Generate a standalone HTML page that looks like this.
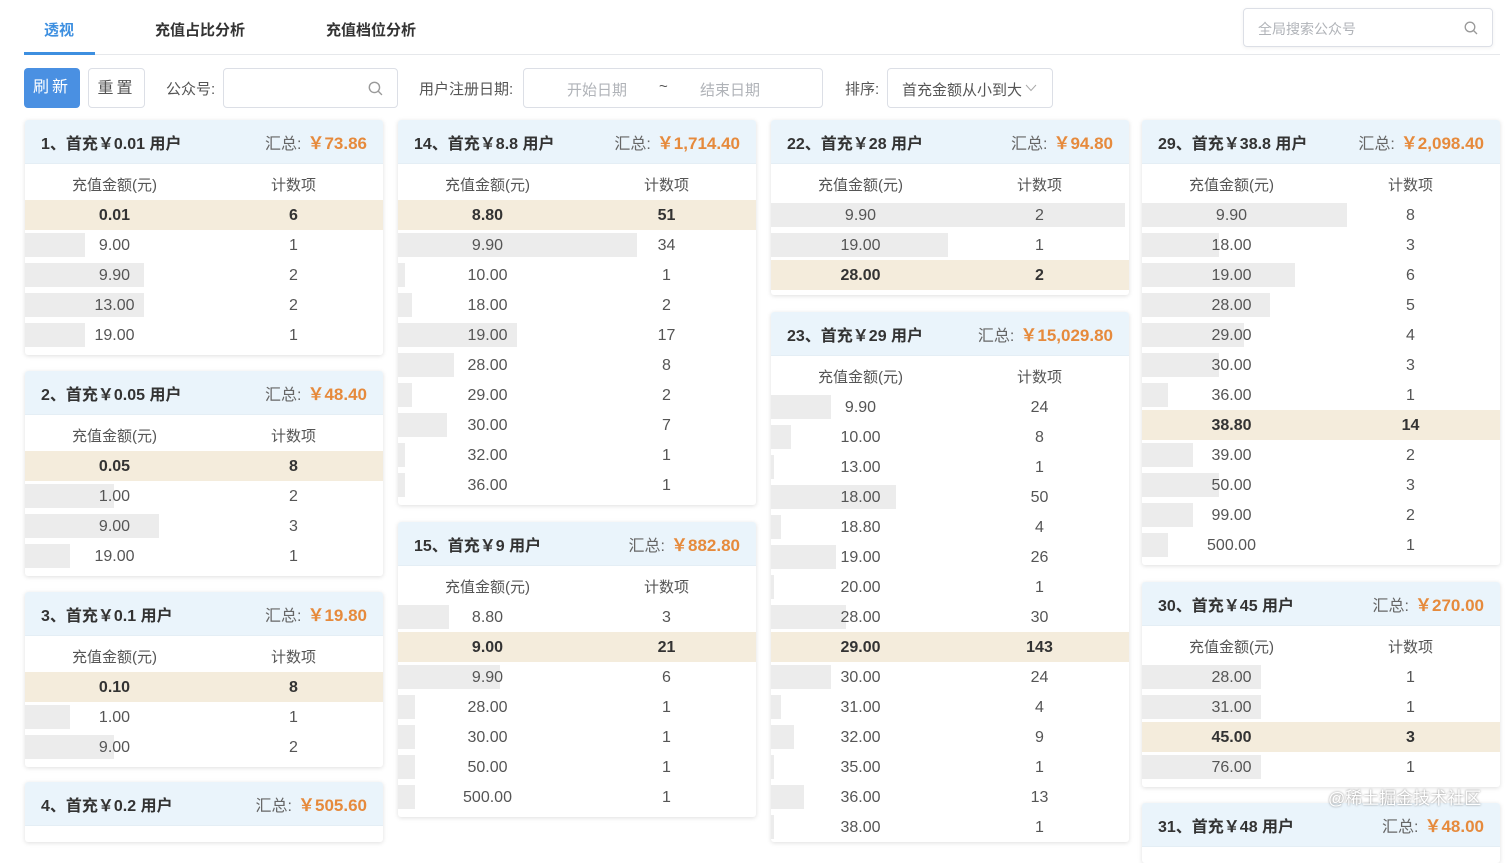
<!DOCTYPE html>
<html><head><meta charset="utf-8">
<style>
*{margin:0;padding:0;box-sizing:border-box}
body{width:1512px;height:829px;overflow:hidden;background:#fff;font-family:"Liberation Sans","Noto Sans CJK SC",sans-serif;color:#333;position:relative}
.tabs{position:absolute;left:24px;top:0;right:12px;height:55px;border-bottom:1px solid #e6e8eb}
.tab{position:absolute;top:19px;font-size:15px;font-weight:bold;color:#333}
.tab.a{color:#3d8fe0}
.ul{position:absolute;left:0;top:52px;width:71px;height:3px;background:#3d8fe0}
.gs{position:absolute;left:1243px;top:8px;width:250px;height:39px;border:1px solid #dcdfe6;border-radius:4px;box-shadow:0 1px 4px rgba(0,0,0,.06);font-size:14px;color:#b0b3b8;padding:10px 14px}
.btn{position:absolute;top:68px;height:40px;border-radius:4px;font-size:16px;text-align:center;line-height:40px;letter-spacing:3px}
.lbl{position:absolute;top:78px;font-size:15px;color:#555}
.inp{position:absolute;top:68px;height:40px;border:1px solid #dcdfe6;border-radius:4px;font-size:15px;color:#555}
.card{position:absolute;width:358px;background:#fff;box-shadow:0 1px 5px rgba(0,0,0,.13);border-radius:3px;overflow:hidden;padding-bottom:5px}
.hd{height:44px;background:#eaf4fb;display:flex;justify-content:space-between;align-items:center;padding:0 16px;font-size:16px;font-weight:bold;color:#333;border-bottom:1px solid #e4eef5}
.hd b{font-weight:normal;color:#666}
.hd em{font-style:normal;color:#e68a3c;font-weight:bold;margin-left:6px;font-size:17px}
.th{height:36px;display:flex;align-items:center;font-size:15px;color:#555;padding-top:4px}
.th span,.r span{width:50%;text-align:center;position:relative}
.r{height:30px;display:flex;align-items:center;font-size:16px;color:#555;position:relative;padding-top:1px}
.r i{position:absolute;left:0;top:3px;height:24px;background:#ececec}
.r.h{background:#f4ecdc;font-weight:bold;color:#333}
.wm{position:absolute;left:1328px;top:784px;font-size:17px;color:#fff;text-shadow:0 0 2px rgba(0,0,0,.5)}
</style></head><body>
<div class="tabs">
<div class="tab a" style="left:20px">透视</div>
<div class="tab" style="left:131px">充值占比分析</div>
<div class="tab" style="left:302px">充值档位分析</div>
<div class="ul"></div>
</div>
<div class="gs">全局搜索公众号<svg style="position:absolute;right:14px;top:12px" width="14" height="14" viewBox="0 0 14 14"><circle cx="6" cy="6" r="4.8" fill="none" stroke="#999" stroke-width="1.3"/><path d="M9.5 9.5L13 13" stroke="#999" stroke-width="1.3"/></svg></div>
<div class="btn" style="left:24px;width:56px;background:#4a90e2;color:#fff">刷新</div>
<div class="btn" style="left:88px;width:57px;border:1px solid #dcdfe6;color:#555">重置</div>
<div class="lbl" style="left:166px">公众号:</div>
<div class="inp" style="left:223px;width:175px"><svg style="position:absolute;right:14px;top:12px" width="15" height="15" viewBox="0 0 14 14"><circle cx="6" cy="6" r="4.8" fill="none" stroke="#999" stroke-width="1.3"/><path d="M9.5 9.5L13 13" stroke="#999" stroke-width="1.3"/></svg></div>
<div class="lbl" style="left:419px">用户注册日期:</div>
<div class="inp" style="left:523px;width:300px;color:#b0b3b8"><span style="position:absolute;left:43px;top:10px">开始日期</span><span style="position:absolute;left:135px;top:9px;color:#555">~</span><span style="position:absolute;left:176px;top:10px">结束日期</span></div>
<div class="lbl" style="left:845px">排序:</div>
<div class="inp" style="left:887px;width:166px"><span style="position:absolute;left:14px;top:10px">首充金额从小到大</span><svg style="position:absolute;left:137px;top:15px" width="12" height="8" viewBox="0 0 12 8"><path d="M1 1L6 6.5L11 1" fill="none" stroke="#aaa" stroke-width="1"/></svg></div>

<div class="card" style="left:25px;top:120px"><div class="hd">1、首充￥0.01 用户<span><b>汇总:</b><em>￥73.86</em></span></div>
<div class="th"><span>充值金额(元)</span><span>计数项</span></div>
<div class="r h"><span>0.01</span><span>6</span></div>
<div class="r"><i style="width:60px"></i><span>9.00</span><span>1</span></div>
<div class="r"><i style="width:119px"></i><span>9.90</span><span>2</span></div>
<div class="r"><i style="width:119px"></i><span>13.00</span><span>2</span></div>
<div class="r"><i style="width:60px"></i><span>19.00</span><span>1</span></div></div>

<div class="card" style="left:25px;top:371px"><div class="hd">2、首充￥0.05 用户<span><b>汇总:</b><em>￥48.40</em></span></div>
<div class="th"><span>充值金额(元)</span><span>计数项</span></div>
<div class="r h"><span>0.05</span><span>8</span></div>
<div class="r"><i style="width:89px"></i><span>1.00</span><span>2</span></div>
<div class="r"><i style="width:134px"></i><span>9.00</span><span>3</span></div>
<div class="r"><i style="width:45px"></i><span>19.00</span><span>1</span></div></div>

<div class="card" style="left:25px;top:592px"><div class="hd">3、首充￥0.1 用户<span><b>汇总:</b><em>￥19.80</em></span></div>
<div class="th"><span>充值金额(元)</span><span>计数项</span></div>
<div class="r h"><span>0.10</span><span>8</span></div>
<div class="r"><i style="width:45px"></i><span>1.00</span><span>1</span></div>
<div class="r"><i style="width:89px"></i><span>9.00</span><span>2</span></div></div>

<div class="card" style="left:25px;top:782px;height:60px"><div class="hd">4、首充￥0.2 用户<span><b>汇总:</b><em>￥505.60</em></span></div></div>

<div class="card" style="left:398px;top:120px"><div class="hd">14、首充￥8.8 用户<span><b>汇总:</b><em>￥1,714.40</em></span></div>
<div class="th"><span>充值金额(元)</span><span>计数项</span></div>
<div class="r h"><span>8.80</span><span>51</span></div>
<div class="r"><i style="width:239px"></i><span>9.90</span><span>34</span></div>
<div class="r"><i style="width:7px"></i><span>10.00</span><span>1</span></div>
<div class="r"><i style="width:14px"></i><span>18.00</span><span>2</span></div>
<div class="r"><i style="width:119px"></i><span>19.00</span><span>17</span></div>
<div class="r"><i style="width:56px"></i><span>28.00</span><span>8</span></div>
<div class="r"><i style="width:14px"></i><span>29.00</span><span>2</span></div>
<div class="r"><i style="width:49px"></i><span>30.00</span><span>7</span></div>
<div class="r"><i style="width:7px"></i><span>32.00</span><span>1</span></div>
<div class="r"><i style="width:7px"></i><span>36.00</span><span>1</span></div></div>

<div class="card" style="left:398px;top:522px"><div class="hd">15、首充￥9 用户<span><b>汇总:</b><em>￥882.80</em></span></div>
<div class="th"><span>充值金额(元)</span><span>计数项</span></div>
<div class="r"><i style="width:51px"></i><span>8.80</span><span>3</span></div>
<div class="r h"><span>9.00</span><span>21</span></div>
<div class="r"><i style="width:102px"></i><span>9.90</span><span>6</span></div>
<div class="r"><i style="width:17px"></i><span>28.00</span><span>1</span></div>
<div class="r"><i style="width:17px"></i><span>30.00</span><span>1</span></div>
<div class="r"><i style="width:17px"></i><span>50.00</span><span>1</span></div>
<div class="r"><i style="width:17px"></i><span>500.00</span><span>1</span></div></div>

<div class="card" style="left:771px;top:120px"><div class="hd">22、首充￥28 用户<span><b>汇总:</b><em>￥94.80</em></span></div>
<div class="th"><span>充值金额(元)</span><span>计数项</span></div>
<div class="r"><i style="width:354px"></i><span>9.90</span><span>2</span></div>
<div class="r"><i style="width:177px"></i><span>19.00</span><span>1</span></div>
<div class="r h"><span>28.00</span><span>2</span></div></div>

<div class="card" style="left:771px;top:312px;height:530px"><div class="hd">23、首充￥29 用户<span><b>汇总:</b><em>￥15,029.80</em></span></div>
<div class="th"><span>充值金额(元)</span><span>计数项</span></div>
<div class="r"><i style="width:60px"></i><span>9.90</span><span>24</span></div>
<div class="r"><i style="width:20px"></i><span>10.00</span><span>8</span></div>
<div class="r"><i style="width:3px"></i><span>13.00</span><span>1</span></div>
<div class="r"><i style="width:125px"></i><span>18.00</span><span>50</span></div>
<div class="r"><i style="width:10px"></i><span>18.80</span><span>4</span></div>
<div class="r"><i style="width:65px"></i><span>19.00</span><span>26</span></div>
<div class="r"><i style="width:3px"></i><span>20.00</span><span>1</span></div>
<div class="r"><i style="width:75px"></i><span>28.00</span><span>30</span></div>
<div class="r h"><span>29.00</span><span>143</span></div>
<div class="r"><i style="width:60px"></i><span>30.00</span><span>24</span></div>
<div class="r"><i style="width:10px"></i><span>31.00</span><span>4</span></div>
<div class="r"><i style="width:23px"></i><span>32.00</span><span>9</span></div>
<div class="r"><i style="width:3px"></i><span>35.00</span><span>1</span></div>
<div class="r"><i style="width:33px"></i><span>36.00</span><span>13</span></div>
<div class="r"><i style="width:3px"></i><span>38.00</span><span>1</span></div></div>

<div class="card" style="left:1142px;top:120px"><div class="hd">29、首充￥38.8 用户<span><b>汇总:</b><em>￥2,098.40</em></span></div>
<div class="th"><span>充值金额(元)</span><span>计数项</span></div>
<div class="r"><i style="width:205px"></i><span>9.90</span><span>8</span></div>
<div class="r"><i style="width:77px"></i><span>18.00</span><span>3</span></div>
<div class="r"><i style="width:153px"></i><span>19.00</span><span>6</span></div>
<div class="r"><i style="width:128px"></i><span>28.00</span><span>5</span></div>
<div class="r"><i style="width:102px"></i><span>29.00</span><span>4</span></div>
<div class="r"><i style="width:77px"></i><span>30.00</span><span>3</span></div>
<div class="r"><i style="width:26px"></i><span>36.00</span><span>1</span></div>
<div class="r h"><span>38.80</span><span>14</span></div>
<div class="r"><i style="width:51px"></i><span>39.00</span><span>2</span></div>
<div class="r"><i style="width:77px"></i><span>50.00</span><span>3</span></div>
<div class="r"><i style="width:51px"></i><span>99.00</span><span>2</span></div>
<div class="r"><i style="width:26px"></i><span>500.00</span><span>1</span></div></div>

<div class="card" style="left:1142px;top:582px"><div class="hd">30、首充￥45 用户<span><b>汇总:</b><em>￥270.00</em></span></div>
<div class="th"><span>充值金额(元)</span><span>计数项</span></div>
<div class="r"><i style="width:119px"></i><span>28.00</span><span>1</span></div>
<div class="r"><i style="width:119px"></i><span>31.00</span><span>1</span></div>
<div class="r h"><span>45.00</span><span>3</span></div>
<div class="r"><i style="width:119px"></i><span>76.00</span><span>1</span></div></div>

<div class="card" style="left:1142px;top:803px;height:60px"><div class="hd">31、首充￥48 用户<span><b>汇总:</b><em>￥48.00</em></span></div></div>

<div class="wm">@稀土掘金技术社区</div>
</body></html>
